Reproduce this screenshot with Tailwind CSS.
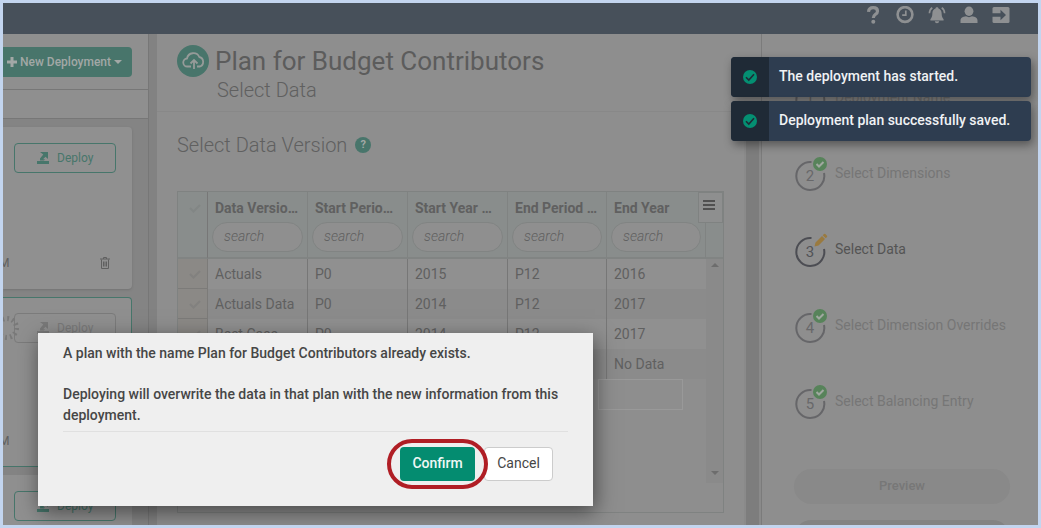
<!DOCTYPE html>
<html lang="en">
<head>
    <meta charset="UTF-8">
    <meta name="viewport" content="width=device-width, initial-scale=1.0">
    <title>Plan for Budget Contributors</title>
    <script src="https://cdn.jsdelivr.net/npm/@tailwindcss/browser@4"></script>
</head>
<body class="font-[Roboto,sans-serif] text-sm text-[#606060]">
    <div class="relative h-screen overflow-hidden border-3 border-[#c3d5ef] bg-[#8e8e8e] flex flex-col">

        <!-- Top bar -->
        <header class="h-[31px] shrink-0 bg-[#47505a] flex justify-end gap-3.5 pt-[3px] pr-7 text-[#8e9092]">
            <button aria-label="Help" class="size-[18px]">
                <svg viewBox="0 0 18 18" fill="none" stroke="currentColor"><path d="M4.5 5.8C4.8 3 6.6 1.7 9.2 1.7c2.7 0 4.3 1.4 4.3 3.5 0 3.4-4.2 2.9-4.2 6.8" stroke-width="3.2"/><circle cx="9.3" cy="15.8" r="2" fill="currentColor" stroke="none"/></svg>
            </button>
            <button aria-label="History" class="size-[18px]">
                <svg viewBox="0 0 18 18" fill="none" stroke="currentColor"><circle cx="9" cy="8.5" r="7.4" stroke-width="2.6"/><path d="M9.8 4.6v4.6H6.2" stroke-width="1.7"/></svg>
            </button>
            <button aria-label="Notifications" class="size-[18px]">
                <svg viewBox="0 0 18 18" fill="currentColor"><path d="M9 1.3c.9 0 1.4.5 1.5 1.2 2 .6 3 2.3 3.1 4.6.1 3.3.6 4.7 2 6.1v1.3H2.4v-1.3c1.4-1.4 1.9-2.8 2-6.1C4.5 4.8 5.5 3.1 7.5 2.5 7.6 1.8 8.1 1.3 9 1.3zM6.8 15.2h4.4c-.2 1.3-1 2-2.200 2s-2-.7-2.200-2z"/><path d="M4.300 1.800C2.400 3 1.500 4.700 1.400 7.200M13.700 1.800c1.900 1.200 2.800 2.900 2.900 5.400" fill="none" stroke="currentColor" stroke-width="1.600"/></svg>
            </button>
            <button aria-label="Account" class="size-[18px]">
                <svg viewBox="0 0 18 18" fill="currentColor"><ellipse cx="9" cy="5.200" rx="4.400" ry="4.700"/><path d="M.5 17v-2.500c0-2.600 2.500-3.900 5.500-4.200 1.800 1.100 4.200 1.100 6 0 3 .3 5.500 1.600 5.500 4.200V17z"/></svg>
            </button>
            <button aria-label="Sign out" class="size-[18px]">
                <svg viewBox="0 0 18 18"><rect x=".5" y="1" width="17" height="16" rx="1.500" fill="currentColor"/><path d="M0 7.300h8.500V3.800l5.500 5.200-5.500 5.200v-3.500H0z" fill="#47505a"/></svg>
            </button>
        </header>

        <div class="flex-1 min-h-0 flex">

            <!-- Deployment list -->
            <aside class="w-[146px] shrink-0 border-r border-[#777] bg-[#848484] flex flex-col">
                <div class="h-14 shrink-0 bg-[#8f8f8f] border-b border-[#777] pt-[13px] pr-4">
                    <button class="w-full h-[30px] rounded-r-sm bg-[#48756b] text-[#a2a8a6] text-xs font-medium flex items-center gap-[3px] pl-1">
                        <svg class="size-2.5" viewBox="0 0 10 10" fill="currentColor"><path d="M3.500 0h3v3.500H10v3H6.500V10h-3V6.500H0v-3h3.500z"/></svg>
                        New Deployment
                        <svg class="w-2 h-1" viewBox="0 0 8 4" fill="currentColor"><path d="M0 0h8L4 4z"/></svg>
                    </button>
                </div>
                <div class="h-[29px] shrink-0 bg-[#8f8f8f] border-b border-[#777]"></div>
                <div class="flex-1 min-h-0 overflow-hidden pt-2 pr-4 flex flex-col gap-2">
                    <section class="h-[162px] shrink-0 rounded-r-sm bg-[#909090] shadow-sm flex flex-col">
                        <button class="w-[102px] h-[30px] mt-4 ml-[11px] rounded-sm border border-[#47766b] text-[#47766b] text-xs flex items-center gap-2 pl-[22px]">
                            <svg class="w-3 h-3" viewBox="0 0 12 12" fill="currentColor"><path d="M3 0h8v7L8.500 4.700 6 7.200h2L7 8.500H3V6.500L6.300 2.600z"/><path d="M0 9h12v3H0z"/></svg>
                            Deploy
                        </button>
                        <div class="mt-[82px] pr-[22px] flex justify-between items-center">
                            <span class="text-xs -ml-1">M</span>
                            <button aria-label="Delete deployment">
                                <svg class="w-2.5 h-3" viewBox="0 0 10 12" fill="none" stroke="currentColor"><path d="M0 2h10M3.500 2V.5h3V2M1.500 2.500v9h7v-9M3.500 4.500v5M5 4.500v5M6.500 4.500v5"/></svg>
                            </button>
                        </div>
                    </section>
                    <section class="h-[170px] shrink-0 rounded-r-sm border border-l-0 border-[#47766b] bg-[#8f8f8f] flex flex-col">
                        <button disabled class="relative w-[102px] h-[30px] mt-[15px] ml-[11px] rounded-sm border border-[#7b7b7b] text-[#797979] text-xs flex items-center gap-2 pl-[22px]">
                            <svg class="absolute -left-5 size-6" viewBox="0 0 24 24" stroke="#797979" stroke-dasharray="1.800 3.170" fill="none"><circle cx="12" cy="12" r="9.500" stroke-width="5"/></svg>
                            <svg class="w-3 h-3" viewBox="0 0 12 12" fill="currentColor"><path d="M3 0h8v7L8.500 4.700 6 7.200h2L7 8.500H3V6.500L6.300 2.600z"/><path d="M0 9h12v3H0z"/></svg>
                            Deploy
                        </button>
                        <span class="mt-[90px] text-xs -ml-1">M</span>
                    </section>
                    <section class="h-[162px] shrink-0 rounded-r-sm bg-[#909090]">
                        <button class="w-[102px] h-[30px] mt-4 ml-[11px] rounded-sm border border-[#47766b] text-[#47766b] text-xs flex items-center gap-2 pl-[22px]">
                            <svg class="w-3 h-3" viewBox="0 0 12 12" fill="currentColor"><path d="M3 0h8v7L8.500 4.700 6 7.200h2L7 8.500H3V6.500L6.300 2.600z"/><path d="M0 9h12v3H0z"/></svg>
                            Deploy
                        </button>
                    </section>
                </div>
            </aside>

            <div class="w-2 shrink-0 bg-[#828282]"></div>

            <!-- Data selection -->
            <main class="flex-1 min-w-0 flex flex-col">
                <div class="h-[78px] shrink-0 border-b border-[#888] pt-[11px] pl-5 flex gap-1.5">
                    <svg class="size-8" viewBox="0 0 32 32" fill="none" stroke="#969b99" stroke-width="1.800"><circle cx="16" cy="16" r="16" fill="#48756b" stroke="none"/><path d="M14 21.500h-3.500a4 4 0 0 1-.5-8 6.500 6.500 0 0 1 12.300-1.500 5 5 0 0 1 .7 9.500H20"/><path d="M17 24v-8.500M13.500 18.500l3.500-3.500 3.500 3.500"/></svg>
                    <div>
                        <h1 class="text-[26px] leading-[33px] text-[#5c5c5c]">Plan for Budget Contributors</h1>
                        <p class="pl-0.5 text-xl leading-6 font-light">Select Data</p>
                    </div>
                </div>
                <div class="flex-1 min-h-0 flex">
                    <div class="flex-1 min-w-0 pt-[21px] pl-5 pr-5">
                        <div class="flex items-center gap-2 h-6">
                            <h2 class="text-xl font-light">Select Data Version</h2>
                            <button aria-label="Help" class="size-4 rounded-full bg-[#48756b] text-[#a2a8a6] text-[11px] leading-4 font-bold">?</button>
                        </div>

                        <div class="relative mt-[34px] h-[322px] border border-[#7f8281] flex">
                            <div class="flex-1 min-w-0">
                                <table class="w-full table-fixed border-separate border-spacing-0 text-left">
                                    <colgroup>
                                        <col class="w-[30px]"><col class="w-[100px]"><col class="w-[100px]"><col class="w-[100px]"><col class="w-[99px]"><col>
                                    </colgroup>
                                    <thead class="bg-[#898d8c]">
                                        <tr class="h-[67px]">
                                            <th class="border-r border-r-[#777] border-b-2 border-b-[#818483] align-top pt-2.5 pl-[11px]"><svg class="w-3 h-3" viewBox="0 0 12 12" fill="none" stroke="#828685" stroke-width="2"><path d="M1 6l3.500 3.500L11 3"/></svg></th>
                                            <th class="border-r border-r-[#808382] border-b-2 border-b-[#818483] align-top pt-1.5 px-1">
                                                <label for="f1" class="block whitespace-nowrap pl-[3px] leading-5 font-bold">Data Versio…</label>
                                                <input id="f1" placeholder="search" class="mt-1 w-full h-[30px] rounded-full border border-[#818483] bg-[#8f8f8f] pl-[11px] pb-0.5 font-light italic placeholder:text-[#606060]">
                                            </th>
                                            <th class="border-r border-r-[#808382] border-b-2 border-b-[#818483] align-top pt-1.5 px-1">
                                                <label for="f2" class="block whitespace-nowrap pl-[3px] leading-5 font-bold">Start Perio…</label>
                                                <input id="f2" placeholder="search" class="mt-1 w-full h-[30px] rounded-full border border-[#818483] bg-[#8f8f8f] pl-[11px] pb-0.5 font-light italic placeholder:text-[#606060]">
                                            </th>
                                            <th class="border-r border-r-[#808382] border-b-2 border-b-[#818483] align-top pt-1.5 px-1">
                                                <label for="f3" class="block whitespace-nowrap pl-[3px] leading-5 font-bold">Start Year …</label>
                                                <input id="f3" placeholder="search" class="mt-1 w-full h-[30px] rounded-full border border-[#818483] bg-[#8f8f8f] pl-[11px] pb-0.5 font-light italic placeholder:text-[#606060]">
                                            </th>
                                            <th class="border-r border-r-[#808382] border-b-2 border-b-[#818483] align-top pt-1.5 px-1">
                                                <label for="f4" class="block whitespace-nowrap pl-[3px] leading-5 font-bold">End Period …</label>
                                                <input id="f4" placeholder="search" class="mt-1 w-full h-[30px] rounded-full border border-[#818483] bg-[#8f8f8f] pl-[11px] pb-0.5 font-light italic placeholder:text-[#606060]">
                                            </th>
                                            <th class="border-r border-r-[#808382] border-b-2 border-b-[#818483] align-top pt-1.5 px-1">
                                                <label for="f5" class="block whitespace-nowrap pl-[3px] leading-5 font-bold">End Year</label>
                                                <input id="f5" placeholder="search" class="mt-1 w-full h-[30px] rounded-full border border-[#818483] bg-[#8f8f8f] pl-[11px] pb-0.5 font-light italic placeholder:text-[#606060]">
                                            </th>
                                        </tr>
                                    </thead>
                                    <tbody>
                                        <tr class="h-[30px] bg-[#909090]">
                                            <td class="bg-[#8b8986] border-r border-b border-[#7c7b79] pl-[11px]"><svg class="w-3 h-3" viewBox="0 0 12 12" fill="none" stroke="#82817f" stroke-width="2"><path d="M1 6l3.500 3.500L11 3"/></svg></td>
                                            <td class="border-r border-[#777] pl-[7px]">Actuals</td>
                                            <td class="border-r border-[#777] pl-[7px]">P0</td>
                                            <td class="border-r border-[#777] pl-[7px]">2015</td>
                                            <td class="border-r border-[#777] pl-[7px]">P12</td>
                                            <td class="pl-[7px]">2016</td>
                                        </tr>
                                        <tr class="h-[30px] bg-[#8b8b8b]">
                                            <td class="bg-[#8b8986] border-r border-b border-[#7c7b79] pl-[11px]"><svg class="w-3 h-3" viewBox="0 0 12 12" fill="none" stroke="#82817f" stroke-width="2"><path d="M1 6l3.500 3.500L11 3"/></svg></td>
                                            <td class="border-r border-[#777] pl-[7px]">Actuals Data</td>
                                            <td class="border-r border-[#777] pl-[7px]">P0</td>
                                            <td class="border-r border-[#777] pl-[7px]">2014</td>
                                            <td class="border-r border-[#777] pl-[7px]">P12</td>
                                            <td class="pl-[7px]">2017</td>
                                        </tr>
                                        <tr class="h-[30px] bg-[#909090]">
                                            <td class="bg-[#8b8986] border-r border-b border-[#7c7b79] pl-[11px]"><svg class="w-3 h-3" viewBox="0 0 12 12" fill="none" stroke="#82817f" stroke-width="2"><path d="M1 6l3.500 3.500L11 3"/></svg></td>
                                            <td class="border-r border-[#777] pl-[7px]">Best Case</td>
                                            <td class="border-r border-[#777] pl-[7px]">P0</td>
                                            <td class="border-r border-[#777] pl-[7px]">2014</td>
                                            <td class="border-r border-[#777] pl-[7px]">P12</td>
                                            <td class="pl-[7px]">2017</td>
                                        </tr>
                                        <tr class="h-[30px] bg-[#8b8b8b]">
                                            <td class="bg-[#8b8986] border-r border-b border-[#7c7b79]"></td>
                                            <td class="border-r border-[#777]"></td>
                                            <td class="border-r border-[#777]"></td>
                                            <td class="border-r border-[#777]"></td>
                                            <td class="border-r border-[#777]"></td>
                                            <td class="pl-[7px]">No Data</td>
                                        </tr>
                                    </tbody>
                                </table>
                                <div class="mr-[23px] ml-auto w-[85px] h-[31px] border border-[#999]"></div>
                            </div>
                            <!-- Grid scrollbar -->
                            <div class="w-[17px] flex flex-col">
                                <div class="h-[67px] bg-[#898d8c] border-b-2 border-[#818483]"></div>
                                <div class="h-56 bg-[#8a8a8a] flex flex-col items-center justify-between pt-1 pb-2">
                                    <svg class="w-2 h-1" viewBox="0 0 8 4" fill="#6d6d6d"><path d="M0 4h8L4 0z"/></svg>
                                    <svg class="w-2 h-1" viewBox="0 0 8 4" fill="#6d6d6d"><path d="M0 0h8L4 4z"/></svg>
                                </div>
                            </div>
                            <button aria-label="Grid menu" class="absolute top-0 right-0 w-[25px] h-[31px] border border-[#7f8281] bg-[#8e8f8f] flex pl-1 pt-[7px]">
                                <svg class="w-3 h-2.5" viewBox="0 0 12 10" fill="#505050"><path d="M0 0h12v2H0zM0 4h12v2H0zM0 8h12v2H0z"/></svg>
                            </button>
                        </div>
                    </div>
                    <div class="w-[17px] bg-[#8a8a8a] px-0.5"><div class="h-full bg-[#7d7d7d]"></div></div>
                </div>
            </main>

            <!-- Steps -->
            <aside class="w-[277px] shrink-0 border-l border-[#7b7b7b] pl-8 pr-7 pt-[46px] flex flex-col overflow-hidden">
                <ol class="flex flex-col gap-[41px] text-[#767676]">
                    <li class="flex items-center gap-[7px]">
                        <svg class="w-[34px] h-[35px]" viewBox="0 0 34 35"><path d="M30 17A14 14 0 1 1 17.500 6" fill="none" stroke="#666669" stroke-width="2"/><text x="16" y="25" text-anchor="middle" font-size="15" fill="#68686a">1</text></svg>
                        <span class="pb-0.5">Deployment Name</span>
                    </li>
                    <li class="flex items-center gap-[7px]">
                        <svg class="w-[34px] h-[35px]" viewBox="0 0 34 35"><path d="M30 17A14 14 0 1 1 17.500 6" fill="none" stroke="#666669" stroke-width="2"/><text x="16" y="25" text-anchor="middle" font-size="15" fill="#68686a">2</text><circle cx="26" cy="8" r="7" fill="#57835a"/><path d="M22.500 8l2.500 2.500 4.500-4.500" fill="none" stroke="#a0a8a0" stroke-width="2"/></svg>
                        <span class="pb-0.5">Select Dimensions</span>
                    </li>
                    <li class="flex items-center gap-[7px] text-[#545454]">
                        <svg class="w-[34px] h-[35px]" viewBox="0 0 34 35"><path d="M30 17A14 14 0 1 1 17.500 6" fill="none" stroke="#4c4d53" stroke-width="2"/><text x="16" y="25" text-anchor="middle" font-size="15" fill="#525357">3</text><path d="M20.500 14.500l1-4 6.500-6.500 3 3-6.500 6.500zM28.700 3.300l1.300-1.300q.7-.5 1.300 0l1.700 1.700q.5.600 0 1.300l-1.300 1.300z" fill="#9a7a3f"/></svg>
                        <span class="pb-0.5">Select Data</span>
                    </li>
                    <li class="flex items-center gap-[7px]">
                        <svg class="w-[34px] h-[35px]" viewBox="0 0 34 35"><path d="M30 17A14 14 0 1 1 17.500 6" fill="none" stroke="#666669" stroke-width="2"/><text x="16" y="25" text-anchor="middle" font-size="15" fill="#68686a">4</text><circle cx="26" cy="8" r="7" fill="#57835a"/><path d="M22.500 8l2.500 2.500 4.500-4.500" fill="none" stroke="#a0a8a0" stroke-width="2"/></svg>
                        <span class="pb-0.5">Select Dimension Overrides</span>
                    </li>
                    <li class="flex items-center gap-[7px]">
                        <svg class="w-[34px] h-[35px]" viewBox="0 0 34 35"><path d="M30 17A14 14 0 1 1 17.500 6" fill="none" stroke="#666669" stroke-width="2"/><text x="16" y="25" text-anchor="middle" font-size="15" fill="#68686a">5</text><circle cx="26" cy="8" r="7" fill="#57835a"/><path d="M22.500 8l2.500 2.500 4.500-4.500" fill="none" stroke="#a0a8a0" stroke-width="2"/></svg>
                        <span class="pb-0.5">Select Balancing Entry</span>
                    </li>
                </ol>
                <button class="mt-[50px] h-[35px] shrink-0 rounded-full bg-[#898989] text-[#777] text-[13px] font-medium">Preview</button>
                <button aria-label="Next" class="mt-4 h-[35px] shrink-0 rounded-full bg-[#838383]"></button>
            </aside>
        </div>

        <!-- Notifications -->
        <div class="absolute top-[54px] right-[7px] w-[300px] flex flex-col gap-1 text-[#f0f2f4] font-medium">
            <div class="h-10 rounded-sm overflow-hidden bg-[#2e3d50] shadow-[2px_4px_10px_rgba(0,0,0,0.4)] flex items-center">
                <div class="w-[38px] h-full bg-[#1f2a36] flex items-center justify-center">
                    <svg class="size-3.5" viewBox="0 0 14 14"><circle cx="7" cy="7" r="7" fill="#048f72"/><path d="M3 7.200l2.800 2.800L11 4.300" fill="none" stroke="#1f2a36" stroke-width="1.600"/></svg>
                </div>
                <p class="pl-2.5 pb-0.5">The deployment has started.</p>
            </div>
            <div class="h-10 rounded-sm overflow-hidden bg-[#2e3d50] shadow-[2px_4px_10px_rgba(0,0,0,0.4)] flex items-center">
                <div class="w-[38px] h-full bg-[#1f2a36] flex items-center justify-center">
                    <svg class="size-3.5" viewBox="0 0 14 14"><circle cx="7" cy="7" r="7" fill="#048f72"/><path d="M3 7.200l2.800 2.800L11 4.300" fill="none" stroke="#1f2a36" stroke-width="1.600"/></svg>
                </div>
                <p class="pl-2.5 pb-0.5">Deployment plan successfully saved.</p>
            </div>
        </div>

        <!-- Confirm dialog -->
        <div role="dialog" class="absolute left-[35px] top-[330px] w-[555px] bg-[#efefef] shadow-[2px_6px_20px_rgba(0,0,0,0.5)] px-[25px] pt-2.5 pb-[25px] text-[#464646]">
            <div class="border-b border-[#e0e0e0] pb-[5px] leading-[21px] font-medium">
                <p>A plan with the name Plan for Budget Contributors already exists.</p>
                <p class="mt-5">Deploying will overwrite the data in that plan with the new information from this deployment.</p>
            </div>
            <div class="mt-[15px] pr-[15px] flex justify-end gap-[9px]">
                <div class="relative">
                    <button class="w-[75px] h-[34px] pb-0.5 rounded-sm bg-[#048c70] text-[#f0f8f5] font-medium">Confirm</button>
                    <div class="absolute -inset-x-[13px] -inset-y-2 rounded-full border-4 border-[#b01e25] pointer-events-none"></div>
                </div>
                <button class="w-[69px] h-[34px] pb-0.5 rounded-sm border border-[#ccc] bg-white">Cancel</button>
            </div>
        </div>
    </div>
</body>
</html>
